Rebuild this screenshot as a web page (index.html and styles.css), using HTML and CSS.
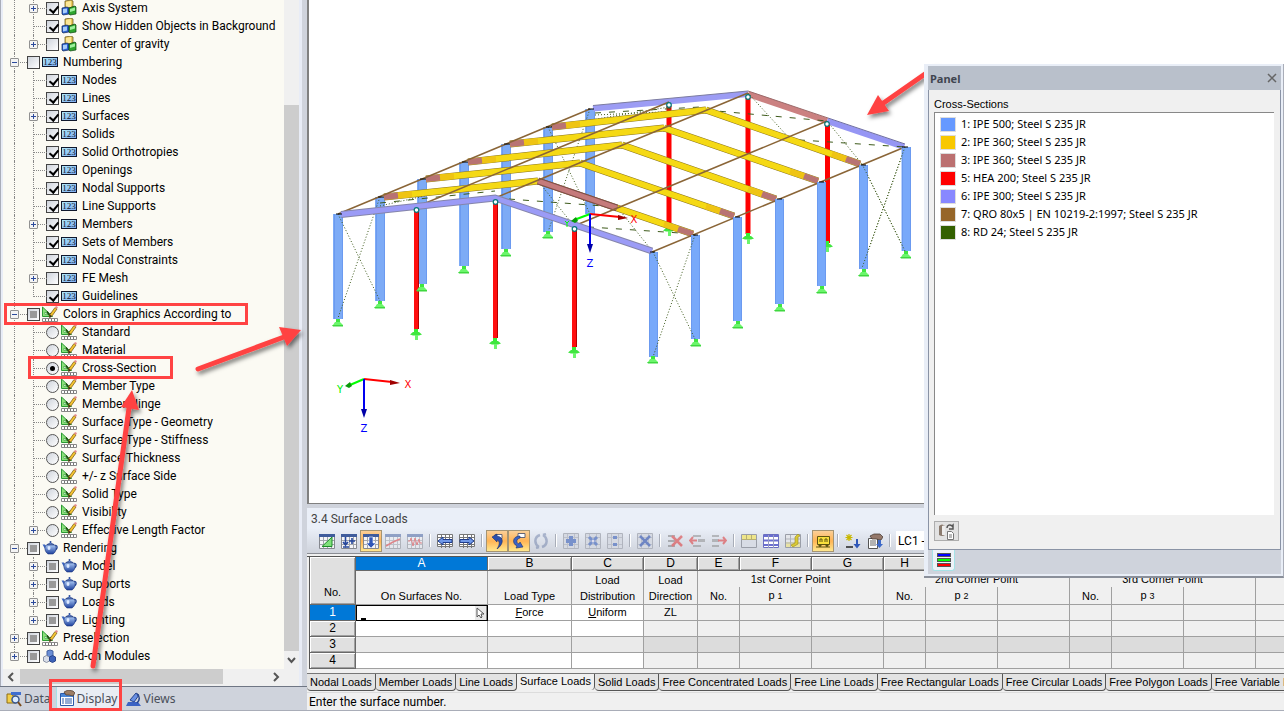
FILE: index.html
```html
<!DOCTYPE html>
<html lang="en">
<head>
    <meta charset="UTF-8">
    <meta name="viewport" content="width=device-width, initial-scale=1.0">
    <title>3.4 Surface Loads</title>
    <link rel="stylesheet" href="styles.css">
</head>
<body>
    <!-- shared icons -->
    <svg class="defs" width="0" height="0">
        <defs>
            <linearGradient id="g-blue" x1="0" y1="0" x2="0" y2="1"><stop offset="0" stop-color="#a9c8f5"/><stop offset="1" stop-color="#1c3f9c"/></linearGradient>
            <linearGradient id="g-num" x1="0" y1="0" x2="1" y2="1"><stop offset="0" stop-color="#b4ecfa"/><stop offset="1" stop-color="#7aa7f0"/></linearGradient>
            <filter id="shadow" x="-20%" y="-20%" width="150%" height="150%"><feDropShadow dx="2" dy="3" stdDeviation="2" flood-color="#000" flood-opacity=".5"/></filter>
        </defs>
        <symbol id="i-cubes" viewBox="0 0 16 16">
            <path d="M4 1l6-1 2 1v6l-6 1-2-1z" fill="#e9c85a" stroke="#5a4a12" stroke-width=".7"/>
            <path d="M5 2l5-1v6l-5 .5z" fill="#fbe796"/>
            <path d="M1 8l5-1 2 1v6l-6 1-1-1z" fill="#2c62cf" stroke="#0d2458" stroke-width=".7"/>
            <path d="M2 9l4-.5v4l-4 1z" fill="#a8cdfb"/>
            <path d="M8 8l6-2 1 1v7l-6 1-1-1z" fill="#2fa62f" stroke="#0c4410" stroke-width=".7"/>
            <path d="M9 9l5-1.5v3l-5 1.500z" fill="#9df09d"/>
        </symbol>
        <symbol id="i-num" viewBox="0 0 16 16">
            <rect x=".5" y="3.5" width="15" height="9" fill="url(#g-num)" stroke="#10182c"/>
            <text x="8" y="11" class="num-text">123</text>
        </symbol>
        <symbol id="i-color" viewBox="0 0 16 16">
            <path d="M.5 1v9.5h10z" fill="#8be07a" stroke="#2b9a35"/>
            <path d="M3 6v2.500h3z" fill="#fff" stroke="#2b9a35" stroke-width=".6"/>
            <path d="M5 5.500l3 4.500 1-3" fill="none" stroke="#1f4a12" stroke-width="1.500"/>
            <path d="M8 8.500l5-7 2 1.500-5 7-2.500 1.500z" fill="#f5c531" stroke="#6d4f10" stroke-width=".7"/>
            <path d="M8 9l-.5 2.500L10 10z" fill="#222"/>
            <path d="M13 1.500l1-1.500 2 1-1 2z" fill="#e58a8a"/>
            <path d="M.5 12.500h15v3H.5z" fill="#fff" stroke="#888"/>
            <path d="M3.500 13v2M6.500 13v2M9.500 13v2M12.500 13v2" stroke="#777"/>
        </symbol>
        <symbol id="i-pot" viewBox="0 0 16 16">
            <path d="M13 5.500c3-.5 3 4-1 5" fill="none" stroke="#274a9c" stroke-width="1.300"/>
            <path d="M.5 4.500L3 4.500l2 4v4z" fill="#3a63c0"/>
            <path d="M4 5h9c2 3 1 7-2 9H6C3 12 2 8 4 5z" fill="url(#g-blue)" stroke="#1c357c" stroke-width=".6"/>
            <path d="M5 4.500q3.500-3 7 0z" fill="#5f8be0" stroke="#1c357c" stroke-width=".6"/>
            <circle cx="8.500" cy="2" r="1" fill="#274a9c"/>
            <ellipse cx="7" cy="8" rx="1.500" ry="2" fill="#dce9ff"/>
        </symbol>
        <symbol id="i-addon" viewBox="0 0 16 16">
            <path d="M5 3l3-1 3 1v5l-3 1-3-1z" fill="#6b8fd6" stroke="#42609f"/>
            <path d="M1.500 9l3-1.500 3 1.500v4l-3 1.500-3-1.500z" fill="#d9dee8" stroke="#8b93a5"/>
            <path d="M7.500 9l3-1.500 3 1.500v4l-3 1.500-3-1.500z" fill="#3c62b8" stroke="#2a468b"/>
        </symbol>
        <symbol id="t-grid" viewBox="0 0 16 16">
            <path d="M.5 1.500h15v14H.5z" fill="#f4f5f8" stroke="#85888f"/>
            <path d="M0 1h16v3H0z" fill="#3f5c9c"/>
            <path d="M4.500 4v11M8.500 4v11M12.500 4v11M1 7.500h14M1 11.500h14" stroke="#a3a6ad"/>
        </symbol>
        <symbol id="t-move" viewBox="0 0 16 16">
            <path d="M.5 1.500h15v12H.5z" fill="#fff" stroke="#777"/>
            <path d="M4.500 2v13M8.500 2v13M12.500 2v13M1 4.500h14M1 11.500h14" stroke="#777"/>
        </symbol>
        <symbol id="t-grey" viewBox="0 0 16 16">
            <path d="M.5 .5h15v15H.5z" fill="#d5d9e2" stroke="#b0b4be"/>
            <path d="M4.500 1v14M11.500 1v14M1 4.500h14M1 11.500h14" stroke="#bcc0ca"/>
        </symbol>
        <symbol id="support" viewBox="-6 0 12 12" overflow="visible">
            <path d="M-2 0h4v3h-4z" fill="#3fe63f"/>
            <path d="M-3 3h5l3 3h-10z" fill="#6cf56c"/>
            <path d="M-6 6h11v1.500H-5z" fill="#3fd83f"/>
        </symbol>
        <symbol id="support-red" viewBox="-6 0 12 12" overflow="visible">
            <path d="M-2 0h4v4h-4z" fill="#35ef35"/>
            <path d="M-3 3h6l3 2.500-3 1h-6l-3-1z" fill="#3fe63f"/>
            <path d="M-1 6h3v5h-3z" fill="#6cf56c"/>
        </symbol>
    </svg>

    <div class="app">
        <aside class="navigator">
            <div class="tree-area">
                <ul class="tree">
                    <li class="row sub"><button class="tog" aria-label="Expand"></button><label><input type="checkbox" checked><svg><use href="#i-cubes"/></svg>Axis System</label></li>
                    <li class="row sub"><label><input type="checkbox" checked><svg><use href="#i-cubes"/></svg>Show Hidden Objects in Background</label></li>
                    <li class="row sub last"><button class="tog" aria-label="Expand"></button><label><input type="checkbox"><svg><use href="#i-cubes"/></svg>Center of gravity</label></li>
                    <li class="row"><button class="tog open" aria-label="Collapse"></button><label><input type="checkbox"><svg><use href="#i-num"/></svg>Numbering</label></li>
                    <li class="row sub"><label><input type="checkbox" checked><svg><use href="#i-num"/></svg>Nodes</label></li>
                    <li class="row sub"><label><input type="checkbox" checked><svg><use href="#i-num"/></svg>Lines</label></li>
                    <li class="row sub"><button class="tog" aria-label="Expand"></button><label><input type="checkbox" checked><svg><use href="#i-num"/></svg>Surfaces</label></li>
                    <li class="row sub"><label><input type="checkbox" checked><svg><use href="#i-num"/></svg>Solids</label></li>
                    <li class="row sub"><label><input type="checkbox" checked><svg><use href="#i-num"/></svg>Solid Orthotropies</label></li>
                    <li class="row sub"><label><input type="checkbox" checked><svg><use href="#i-num"/></svg>Openings</label></li>
                    <li class="row sub"><label><input type="checkbox" checked><svg><use href="#i-num"/></svg>Nodal Supports</label></li>
                    <li class="row sub"><label><input type="checkbox" checked><svg><use href="#i-num"/></svg>Line Supports</label></li>
                    <li class="row sub"><button class="tog" aria-label="Expand"></button><label><input type="checkbox" checked><svg><use href="#i-num"/></svg>Members</label></li>
                    <li class="row sub"><label><input type="checkbox" checked><svg><use href="#i-num"/></svg>Sets of Members</label></li>
                    <li class="row sub"><label><input type="checkbox" checked><svg><use href="#i-num"/></svg>Nodal Constraints</label></li>
                    <li class="row sub"><button class="tog" aria-label="Expand"></button><label><input type="checkbox"><svg><use href="#i-num"/></svg>FE Mesh</label></li>
                    <li class="row sub last"><label><input type="checkbox" checked><svg><use href="#i-num"/></svg>Guidelines</label></li>
                    <li class="row"><button class="tog open" aria-label="Collapse"></button><label><input type="checkbox" class="mixed"><svg><use href="#i-color"/></svg>Colors in Graphics According to</label></li>
                    <li class="row sub"><label><input type="radio" name="colors"><svg><use href="#i-color"/></svg>Standard</label></li>
                    <li class="row sub"><label><input type="radio" name="colors"><svg><use href="#i-color"/></svg>Material</label></li>
                    <li class="row sub"><label><input type="radio" name="colors" checked><svg><use href="#i-color"/></svg>Cross-Section</label></li>
                    <li class="row sub"><label><input type="radio" name="colors"><svg><use href="#i-color"/></svg>Member Type</label></li>
                    <li class="row sub"><label><input type="radio" name="colors"><svg><use href="#i-color"/></svg>Member Hinge</label></li>
                    <li class="row sub"><label><input type="radio" name="colors"><svg><use href="#i-color"/></svg>Surface Type - Geometry</label></li>
                    <li class="row sub"><label><input type="radio" name="colors"><svg><use href="#i-color"/></svg>Surface Type - Stiffness</label></li>
                    <li class="row sub"><label><input type="radio" name="colors"><svg><use href="#i-color"/></svg>Surface Thickness</label></li>
                    <li class="row sub"><label><input type="radio" name="colors"><svg><use href="#i-color"/></svg>+/- z Surface Side</label></li>
                    <li class="row sub"><label><input type="radio" name="colors"><svg><use href="#i-color"/></svg>Solid Type</label></li>
                    <li class="row sub"><label><input type="radio" name="colors"><svg><use href="#i-color"/></svg>Visibility</label></li>
                    <li class="row sub last"><button class="tog" aria-label="Expand"></button><label><input type="radio" name="colors"><svg><use href="#i-color"/></svg>Effective Length Factor</label></li>
                    <li class="row"><button class="tog open" aria-label="Collapse"></button><label><input type="checkbox" class="mixed"><svg><use href="#i-pot"/></svg>Rendering</label></li>
                    <li class="row sub"><button class="tog" aria-label="Expand"></button><label><input type="checkbox" class="mixed"><svg><use href="#i-pot"/></svg>Model</label></li>
                    <li class="row sub"><button class="tog" aria-label="Expand"></button><label><input type="checkbox" class="mixed"><svg><use href="#i-pot"/></svg>Supports</label></li>
                    <li class="row sub"><button class="tog" aria-label="Expand"></button><label><input type="checkbox" class="mixed"><svg><use href="#i-pot"/></svg>Loads</label></li>
                    <li class="row sub last"><button class="tog" aria-label="Expand"></button><label><input type="checkbox" class="mixed"><svg><use href="#i-pot"/></svg>Lighting</label></li>
                    <li class="row"><button class="tog" aria-label="Expand"></button><label><input type="checkbox" class="mixed"><svg><use href="#i-color"/></svg>Preselection</label></li>
                    <li class="row end"><button class="tog" aria-label="Expand"></button><label><input type="checkbox" class="mixed"><svg><use href="#i-addon"/></svg>Add-on Modules</label></li>
                </ul>
                <div class="vscroll">
                    <div class="vthumb"></div>
                    <svg width="15" height="18"><path d="M4 7l3.500 4L11 7" fill="none" stroke="#555" stroke-width="2"/></svg>
                </div>
            </div>
            <div class="hscroll">
                <svg width="17" height="16"><path d="M10 4L6 8l4 4" fill="none" stroke="#555" stroke-width="2"/></svg>
                <div class="htrack"><div class="hthumb"></div></div>
                <svg width="32" height="16"><path d="M7 4l4 4-4 4" fill="none" stroke="#555" stroke-width="2"/></svg>
            </div>
            <nav class="nav-tabs">
                <button class="nav-tab">
                    <svg viewBox="0 0 16 16"><path d="M1 3h5l1 2h3v7H1z" fill="#f3cf4a" stroke="#8d6c14"/><path d="M5 1h10v3H5z" fill="#3f6fd1"/><circle cx="9.500" cy="8.500" r="3.500" fill="#dcecff" stroke="#395890" stroke-width="1.500"/><path d="M12 11l3 4" stroke="#7a4c1c" stroke-width="2"/></svg>Data</button>
                <button class="nav-tab active">
                    <svg viewBox="0 0 16 16"><path d="M1.500 3.500h13v12h-13z" fill="#fff" stroke="#2a5aa8"/><path d="M2 4h12v3H2z" fill="#4a86d8"/><path d="M3 9h2M3 11h2M3 13h2M6 9h7M6 11h7M6 13h7" stroke="#2a5aa8"/><path d="M5 2l4-2 5 1 2 2-2 3-4-1-3 0z" fill="#9c7d64" stroke="#4c382a" stroke-width=".7"/></svg>Display</button>
                <button class="nav-tab">
                    <svg viewBox="0 0 16 16"><path d="M2 11h10l3 4H0z" fill="#3c63c4"/><path d="M4 9l6-7 3 2-5 7z" fill="#6a90e4" stroke="#27458c"/><path d="M11 3c3 3 3 6 0 9" fill="none" stroke="#27458c" stroke-width="1.500"/></svg>Views</button>
            </nav>
        </aside>

        <main class="work">
            <div class="viewport">
                <svg class="model" width="975" height="503" viewBox="309 0 975 503">
                    <!-- rear gable columns -->
                    <g stroke="#f00" stroke-width="5"><path d="M669 106V227M748 98V234M827.500 124V243"/></g>
                    <use href="#support-red" x="663" y="225" width="12" height="12"/>
                    <use href="#support-red" x="742" y="233" width="12" height="12"/>
                    <use href="#support-red" x="821" y="241" width="12" height="12"/>

                    <!-- left wall columns -->
                    <g stroke="#7dabf6" stroke-width="10"><path d="M338 214V319M380 197V301M422 179V284M464 162V266M506 144V249M548 127V232M590 109V214"/></g>
                    <g stroke="#6b9af0"><path d="M334.500 214V319M342.500 214V319M376.500 197V301M384.500 197V301M418.500 179V284M426.500 179V284M460.500 162V266M468.500 162V266M502.500 144V249M510.500 144V249M544.500 127V232M552.500 127V232M586.500 109V214M594.500 109V214"/></g>

                    <!-- rear gable rafters -->
                    <path d="M593 108.500L748 94" stroke="#9c9cf4" stroke-width="6"/>
                    <path d="M593 105.500L748 91" stroke="#7c7ca0"/>
                    <path d="M748 94L827 121" stroke="#cb8181" stroke-width="6"/>
                    <path d="M748 91L828 118" stroke="#9b6a6a"/>
                    <path d="M827 121L904 147" stroke="#9696f4" stroke-width="6"/>
                    <path d="M828 118L905 144" stroke="#6d6da0"/>

                    <!-- roof and wall bracing -->
                    <g class="brace">
                        <path d="M338 214L380 301M380 197L338 318M548 127L590 214M590 109L548 232M862 164L905 251M905 147L862 268"/>
                        <path d="M380 206L459 188M538 181L574 226M617 207L653 252M748 93L790 139M827 121L862 164M548 127L669 107M595 115L706 110"/>
                        <path class="long" d="M495 198L617 207M574 226L695 234M706 110L827 121M785 139L905 147M380 203L495 191M595 113L700 107"/>
                    </g>

                    <!-- inner frames -->
                    <g stroke="#8a7420" stroke-width="7">
                        <path d="M384 197L538 181M426 179L580 163M468 162L622 145M510 144L664 128M552 127L706 110"/>
                        <path d="M538 181L693 234M580 163L734 216M622 145L776 199M664 128L818 181M706 110L860 164"/>
                    </g>
                    <g stroke="#f5d914" stroke-width="6">
                        <path d="M384 197L538 181M426 179L580 163M468 162L622 145M510 144L664 128M552 127L706 110"/>
                        <path d="M538 181L693 234M580 163L734 216M622 145L776 199M664 128L818 181M706 110L860 164"/>
                    </g>
                    <g stroke="#efc414" stroke-width="6"><path d="M398 195.500L412 194M440 177.500L454 176M482 160.500L496 159M524 142.500L538 141M566 125.500L580 124M664 224L678 229M706 206.500L720 211M748 189L762 194M790 171.500L804 176M832 154L846 159"/></g>
                    <g stroke="#b87373" stroke-width="6">
                        <path d="M384 197L398 195.500M426 179L440 177.500M468 162L482 160.500M510 144L524 142.500M552 127L566 125.500"/>
                        <path d="M678 229L693 234M720 211L734 216M762 194L776 199M804 176L818 181M846 159L860 164"/>
                    </g>
                    <path d="M538 181L617 208" stroke="#7d4b4b" stroke-width="7"/>
                    <path d="M538 181L617 208" stroke="#c57b7b" stroke-width="5"/>

                    <!-- purlins -->
                    <g stroke="#8a6537" stroke-width="1.500"><path d="M338 214L590 109M416 207L669 102M495 198L748 93M574 226L827 121M652 252L905 147"/></g>

                    <!-- right wall columns -->
                    <g stroke="#78a9fa" stroke-width="9"><path d="M653.500 252V357M695.500 235V339M737.500 217V321M779.500 199V304M821.500 182V286M863.500 165V269M906 147V251"/></g>
                    <g stroke="#6b9af0"><path d="M649.500 252V357M657.500 252V357M691.500 235V339M699.500 235V339M733.500 217V321M741.500 217V321M775.500 199V304M783.500 199V304M817.500 182V286M825.500 182V286M859.500 165V269M867.500 165V269M902.500 147V251M910.500 147V251"/></g>
                    <g class="brace"><path d="M653 252L695 339M695 235L653 357M905 147L862 268M862 164L905 251"/></g>

                    <!-- front gable -->
                    <path d="M341 214.500L495 198L652 251" fill="none" stroke="#8585aa" stroke-width="7"/>
                    <path d="M341 214.500L495 198L652 251" fill="none" stroke="#9b9bf6" stroke-width="5"/>
                    <g stroke="#b80000" stroke-width="5"><path d="M416.500 210V329M495.500 202V338M574.500 229V347"/></g>
                    <g stroke="#ff0f0f" stroke-width="4"><path d="M416 210V329M495 202V338M574 229V347"/></g>
                    <path d="M336 214h6M378 197h6M420 179h6M462 162h6M504 144h6M546 127h6M588 109h6M650 252h5M693 235h5M735 217h5M777 199h5M819 182h5M861 165h5M902 147h6" stroke="#000"/>

                    <!-- hinges -->
                    <g class="hinge"><circle cx="416.500" cy="210" r="2.300"/><circle cx="495.500" cy="202" r="2.300"/><circle cx="574.500" cy="229" r="2.300"/><circle cx="669" cy="105" r="2.300"/><circle cx="748" cy="97" r="2.300"/><circle cx="827" cy="124" r="2.300"/></g>

                    <!-- supports -->
                    <use href="#support" x="332" y="319" width="12" height="12"/>
                    <use href="#support" x="374" y="301" width="12" height="12"/>
                    <use href="#support" x="416" y="284" width="12" height="12"/>
                    <use href="#support" x="458" y="266" width="12" height="12"/>
                    <use href="#support" x="500" y="249" width="12" height="12"/>
                    <use href="#support" x="542" y="231" width="12" height="12"/>
                    <use href="#support" x="647" y="356" width="12" height="12"/>
                    <use href="#support" x="690" y="339" width="12" height="12"/>
                    <use href="#support" x="732" y="321" width="12" height="12"/>
                    <use href="#support" x="774" y="304" width="12" height="12"/>
                    <use href="#support" x="816" y="286" width="12" height="12"/>
                    <use href="#support" x="858" y="269" width="12" height="12"/>
                    <use href="#support" x="900" y="251" width="12" height="12"/>
                    <use href="#support-red" x="410" y="329" width="12" height="12"/>
                    <use href="#support-red" x="489" y="338" width="12" height="12"/>
                    <use href="#support-red" x="568" y="347" width="12" height="12"/>

                    <!-- work plane axes -->
                    <path d="M590 214L574 220" stroke="#0f0" stroke-width="2"/><path d="M571 221l5-4 2 4-3 2z" fill="#0a9a0a"/>
                    <path d="M565 221l2 2 2-2M567 223v4" stroke="#0f0" fill="none"/>
                    <path d="M590 214L620 217" stroke="#f00" stroke-width="2"/><path d="M628 218l-10-3v5z" fill="#a00000"/>
                    <path d="M590 214V246" stroke="#0000f0" stroke-width="2"/><path d="M587 244h6l-3 9z" fill="#0000a8"/>
                    <text x="634" y="223" class="axis ax-x">X</text><text x="590" y="267" class="axis ax-z">Z</text>
                    <!-- global axes -->
                    <path d="M364 379L350 385" stroke="#0f0" stroke-width="2"/><path d="M345 386l5-4 2 4-3 2z" fill="#0a9a0a"/>
                    <path d="M364 379L392 382" stroke="#f00" stroke-width="2"/><path d="M400 383l-10-3v5z" fill="#a00000"/>
                    <path d="M364 379V411" stroke="#0000f0" stroke-width="2"/><path d="M361 409h6l-3 9z" fill="#0000a8"/>
                    <text x="340" y="393" class="axis ax-y">Y</text><text x="408" y="388" class="axis ax-x">X</text><text x="364" y="432" class="axis ax-z">Z</text>
                </svg>
            </div>

            <section class="tables">
                <h2 class="tables-title">3.4 Surface Loads</h2>
                <div class="toolbar">
                    <button class="tool"><svg viewBox="0 0 16 16"><use href="#t-grid"/><path d="M3 13.500L13 4v9.500z" fill="#7fe07a" stroke="#1f8a2a"/></svg></button>
                    <button class="tool"><svg viewBox="0 0 16 16"><use href="#t-grid"/><path d="M4.500 4v8M2 9l2.500 3L7 9M2 14h6M8 8h6M11 5v6" fill="none" stroke="#26479c" stroke-width="1.600"/></svg></button>
                    <button class="tool on"><svg viewBox="0 0 16 16"><use href="#t-grid"/><path d="M6 4h4v6h3l-5 5-5-5h3z" fill="#2f57b8" stroke="#fff" stroke-width=".6"/></svg></button>
                    <button class="tool dim"><svg viewBox="0 0 16 16"><use href="#t-grid"/><path d="M1 13l7-4 7-3" fill="none" stroke="#e03030" stroke-width="1.500"/></svg></button>
                    <button class="tool dim"><svg viewBox="0 0 16 16"><use href="#t-grid"/><path d="M1 8h2l1-3 2 8 2-8 2 7 2-6 1 4h2" fill="none" stroke="#e03030"/></svg></button>
                    <span class="sep"></span>
                    <button class="tool"><svg viewBox="0 0 16 16"><use href="#t-move"/><path d="M1 8l5-4v2.500h9v3H6V12z" fill="#6f98e8" stroke="#1f3c8c"/></svg></button>
                    <button class="tool"><svg viewBox="0 0 16 16"><use href="#t-move"/><path d="M15 8l-5-4v2.500H1v3h9V12z" fill="#6f98e8" stroke="#1f3c8c"/></svg></button>
                    <span class="sep"></span>
                    <button class="tool on"><svg viewBox="0 0 16 16"><path d="M6 1.500h7v4H6z" fill="#fff" stroke="#667"/><path d="M3 4l5-3v2c7 1 7 8 0 13 3-5 3-8 0-9v2z" fill="#2c4fae" stroke="#18306f" stroke-width=".6"/></svg></button>
                    <button class="tool on"><svg viewBox="0 0 16 16"><path d="M7 .5h7v4H7z" fill="#fff" stroke="#667"/><path d="M9 3C1 3 1 11 6 13l-1 2 7-1-3-5-1 2C5 10 5 6 9 5z" fill="#3c62c4" stroke="#18306f" stroke-width=".6"/></svg></button>
                    <button class="tool dim"><svg viewBox="0 0 16 16"><path d="M7 2C1 4 1 11 6 14M9 14c6-2 6-9 1-12M6 14l-3 1M10 2l3-1" fill="none" stroke="#6f80a8" stroke-width="2.500"/></svg></button>
                    <span class="sep"></span>
                    <button class="tool"><svg viewBox="0 0 16 16"><use href="#t-grey"/><path d="M8 3v10M3 8h10" stroke="#7891cb" stroke-width="4"/></svg></button>
                    <button class="tool"><svg viewBox="0 0 16 16"><use href="#t-grey"/><path d="M4 4l8 8M12 4l-8 8" stroke="#7891cb" stroke-width="3"/><circle cx="8" cy="8" r="1.500" fill="#dde"/></svg></button>
                    <button class="tool"><svg viewBox="0 0 16 16"><use href="#t-grey"/><path d="M6 3h4v3H6zM6 10h4v3H6z" fill="#7891cb"/></svg></button>
                    <span class="sep"></span>
                    <button class="tool"><svg viewBox="0 0 16 16"><use href="#t-grey"/><path d="M3 3l10 10M13 3L3 13" stroke="#6f86c4" stroke-width="2.500"/></svg></button>
                    <span class="sep"></span>
                    <button class="tool dim"><svg viewBox="0 0 16 16"><path d="M1 2h7v2H1zM1 7h7v2H1zM1 12h7v2H1z" fill="#777"/><path d="M5 3l10 10M15 3L5 13" stroke="#d22" stroke-width="2.500"/></svg></button>
                    <button class="tool dim"><svg viewBox="0 0 16 16"><path d="M4 2h8v2H4zM9 6h7v3H9zM4 12h8v2H4z" fill="#888"/><path d="M1 7.500h7M4 4L1 7.500 4 11" fill="none" stroke="#d22" stroke-width="2"/></svg></button>
                    <button class="tool dim"><svg viewBox="0 0 16 16"><path d="M1 2h7v2H1zM1 6h7v3H1zM1 12h7v2H1z" fill="#888"/><path d="M7 7.500h8M12 4l3 3.500-3 3.500" fill="none" stroke="#d22" stroke-width="2"/></svg></button>
                    <span class="sep"></span>
                    <button class="tool"><svg viewBox="0 0 16 16"><path d="M.5 1.500h15v13H.5z" fill="#d8dce5" stroke="#9a9ea8"/><path d="M1 2h14v4H1z" fill="#eee58a"/><path d="M5.500 2v4M10.500 2v4M1 6.500h14" stroke="#b8b070"/></svg></button>
                    <button class="tool"><svg viewBox="0 0 16 16"><path d="M.5 1.500h15v13H.5z" fill="#fff" stroke="#6a6ec0"/><path d="M1 3h14M1 7.500h14M1 12h14" stroke="#6a6ed0" stroke-width="2"/><path d="M5.500 2v13M10.500 2v13" stroke="#9a9ec0"/></svg></button>
                    <button class="tool"><svg viewBox="0 0 16 16"><path d="M.5 1.500h15v13H.5z" fill="#e4e6ea" stroke="#9a9ea8"/><path d="M1 9h14v5H1z" fill="#e8e2a4"/><path d="M5.500 2v12M1 6h14M1 10h14" stroke="#b0b3ba"/><path d="M6 12l4-2V4l3-3 2 2-2 1v7l-5 3z" fill="#d9c936" stroke="#9a8c20" stroke-width=".6"/></svg></button>
                    <span class="sep"></span>
                    <button class="tool on"><svg viewBox="0 0 16 16"><path d="M2.500 3.500h12v8h-12z" fill="#f9df3c" stroke="#5f5410"/><path d="M5 9V6h2v3M10 9V6h2v3M1 14h14" fill="none" stroke="#5f5410"/><circle cx="5" cy="12.500" r="1.500" fill="#5f5410"/><circle cx="12" cy="12.500" r="1.500" fill="#5f5410"/></svg></button>
                    <span class="sep"></span>
                    <button class="tool"><svg viewBox="0 0 16 16"><path d="M4 1v7M.5 4.500h7M1.500 2l5 5M6.500 2l-5 5" stroke="#c9b800" stroke-width="1.200"/><path d="M1 14h7" stroke="#222" stroke-width="1.500"/><path d="M11 6h2v5h2.500L12 15.500 8.500 11H11z" fill="#2f57b8"/></svg></button>
                    <button class="tool"><svg viewBox="0 0 16 16"><path d="M1.500 5.500h9v10h-9z" fill="#fff" stroke="#555"/><path d="M3 8h6M3 10h6M3 12h6" stroke="#666"/><path d="M3 3l4-2 6 0 3 3-2 3-5-1-4 0z" fill="#94786a" stroke="#3d3029" stroke-width=".7"/><path d="M11 7h3v4h2l-3.500 4L9 11h2z" fill="#3c68c8"/></svg></button>
                    <span class="sep"></span>
                    <select class="case" aria-label="Load case"><option>LC1 - Self-weight</option></select>
                </div>

                <div class="sheet">
                    <table class="grid">
                        <colgroup>
                            <col class="c-no"><col class="c-a"><col class="c-b"><col class="c-p"><col class="c-d">
                            <col class="c-n"><col class="c-p"><col class="c-p">
                            <col class="c-n"><col class="c-p"><col class="c-p">
                            <col class="c-n"><col class="c-p"><col class="c-p"><col class="c-p">
                        </colgroup>
                        <thead>
                            <tr class="letters"><th rowspan="3" class="corner">No.</th><th class="sel">A</th><th>B</th><th>C</th><th>D</th><th>E</th><th>F</th><th>G</th><th>H</th><th>I</th><th>J</th><th>K</th><th>L</th><th>M</th><th></th></tr>
                            <tr class="names"><th rowspan="2">On Surfaces No.</th><th rowspan="2">Load Type</th><th rowspan="2">Load<br>Distribution</th><th rowspan="2">Load<br>Direction</th><th colspan="3" class="group">1st Corner Point</th><th colspan="3" class="group">2nd Corner Point</th><th colspan="3" class="group">3rd Corner Point</th><th rowspan="2"></th></tr>
                            <tr class="names"><th>No.</th><th>p <small>1</small></th><th></th><th>No.</th><th>p <small>2</small></th><th></th><th>No.</th><th>p <small>3</small></th><th></th></tr>
                        </thead>
                        <tbody>
                            <tr><th class="sel">1</th><td class="edit"><div class="editor"><input type="text" value="" aria-label="On Surfaces No."><button class="pick" aria-label="Pick"><svg width="10" height="12"><path d="M2 1v9l2-2 2 3 1-1-1-3h3z" fill="#fff" stroke="#555"/></svg></button></div></td><td><u>F</u>orce</td><td><u>U</u>niform</td><td class="off">ZL</td><td class="off"></td><td class="off"></td><td class="off"></td><td class="off"></td><td class="off"></td><td class="off"></td><td class="off"></td><td class="off"></td><td class="off"></td><td class="off"></td></tr>
                            <tr><th>2</th><td></td><td></td><td></td><td class="off"></td><td class="off"></td><td class="off"></td><td class="off"></td><td class="off"></td><td class="off"></td><td class="off"></td><td class="off"></td><td class="off"></td><td class="off"></td><td class="off"></td></tr>
                            <tr class="alt"><th>3</th><td></td><td></td><td></td><td class="off"></td><td class="off"></td><td class="off"></td><td class="off"></td><td class="off"></td><td class="off"></td><td class="off"></td><td class="off"></td><td class="off"></td><td class="off"></td><td class="off"></td></tr>
                            <tr><th>4</th><td></td><td></td><td></td><td class="off"></td><td class="off"></td><td class="off"></td><td class="off"></td><td class="off"></td><td class="off"></td><td class="off"></td><td class="off"></td><td class="off"></td><td class="off"></td><td class="off"></td></tr>
                        </tbody>
                    </table>
                </div>

                <nav class="sheet-tabs">
                    <button>Nodal Loads</button><button>Member Loads</button><button>Line Loads</button><button class="active">Surface Loads</button><button>Solid Loads</button><button>Free Concentrated Loads</button><button>Free Line Loads</button><button>Free Rectangular Loads</button><button>Free Circular Loads</button><button>Free Polygon Loads</button><button>Free Variable Loads</button>
                </nav>
                <footer class="status">Enter the surface number.</footer>
            </section>
        </main>

        <!-- callouts over the window -->
        <svg class="callouts" width="1284" height="711">
            <g fill="none" stroke="#ff4343" stroke-width="3"><path d="M5.500 304.500h241v19h-241zM29.500 357.500h142v20h-142zM50.500 680.500h70v29h-70z"/></g>
            <g filter="url(#shadow)" fill="#ff4343" stroke-linecap="round">
                <path d="M198 369L284 337" stroke="#ff4343" stroke-width="5"/><path d="M301 330l-22-3 8 19z"/>
                <path d="M93 666L129 408" stroke="#ff4343" stroke-width="5"/><path d="M132 390l-11 17 18 3z"/>
                <path d="M935 67L882 104" stroke="#ff4343" stroke-width="5"/><path d="M867 115l11-20 11 16z"/>
            </g>
        </svg>

        <section class="panel">
            <header class="panel-title"><h2>Panel</h2><button class="close" aria-label="Close"><svg width="10" height="10"><path d="M1 1l8 8M9 1L1 9" stroke="#666" stroke-width="1.500"/></svg></button></header>
            <div class="panel-body">
                <h3>Cross-Sections</h3>
                <ul class="legend">
                    <li><i class="sw blue"></i>1: IPE 500; Steel S 235 JR</li>
                    <li><i class="sw yellow"></i>2: IPE 360; Steel S 235 JR</li>
                    <li><i class="sw rose"></i>3: IPE 360; Steel S 235 JR</li>
                    <li><i class="sw red"></i>5: HEA 200; Steel S 235 JR</li>
                    <li><i class="sw violet"></i>6: IPE 300; Steel S 235 JR</li>
                    <li><i class="sw brown"></i>7: QRO 80x5 | EN 10219-2:1997; Steel S 235 JR</li>
                    <li><i class="sw green"></i>8: RD 24; Steel S 235 JR</li>
                </ul>
                <button class="panel-btn" aria-label="Options"><svg width="17" height="17"><path d="M1 3q3-3 6 0v9q-3 2-6 0z" fill="#8b7b6e"/><path d="M4 3q2-1 3 0v9h-3z" fill="#eee"/><path d="M9 5c0-3 3-4 5-2l1-1v4h-4" fill="none" stroke="#555" stroke-width="1.500"/><path d="M9.500 8.500h4l2 2v6h-6z" fill="#fff" stroke="#777"/><path d="M11 12h3M11 14h3" stroke="#777"/></svg></button>
            </div>
            <div class="panel-tabs"><button class="panel-tab" aria-label="Colors"><i class="bar b"></i><i class="bar g"></i><i class="bar r"></i></button></div>
        </section>
    </div>
</body>
</html>
```
FILE: styles.css
```css
* {
    box-sizing: border-box;
}
body {
    margin: 0;
    font-family: "Noto Sans", sans-serif;
    font-size: 12px;
    color: #000;
    background: #cfd3dc;
}
button {
    font: inherit;
    color: inherit;
    margin: 0;
    padding: 0;
    border: 0;
    background: none;
}
h2, h3, ul {
    margin: 0;
    padding: 0;
    font-weight: normal;
}
.defs {
    position: absolute;
}
.app {
    position: relative;
    display: flex;
    height: 100vh;
    min-height: 600px;
    overflow: hidden;
}

/* navigator */
.navigator {
    display: flex;
    flex-direction: column;
    width: 302px;
    flex: none;
    background: #e8ecf6;
    border-left: 1px solid #a9adb8;
}
.tree-area {
    display: flex;
    flex: 1;
    min-height: 0;
    padding: 0 3px 0 2px;
}
.tree {
    flex: 1;
    list-style: none;
    background: #fbfaf3;
    overflow: hidden;
    margin-top: -1px;
    font-family: Roboto, sans-serif;
}
.row {
    display: flex;
    align-items: center;
    height: 18px;
    padding-left: 24px;
    position: relative;
    white-space: nowrap;
}
.row label {
    display: flex;
    align-items: center;
}
.row label svg {
    width: 16px;
    height: 16px;
    margin: 0 5px 0 2px;
}
.row.sub {
    padding-left: 43px;
}
.row::before {
    content: "";
    position: absolute;
    left: 11px;
    top: 0;
    bottom: 0;
    border-left: 1px dotted #888;
}
.row.end::before {
    bottom: 9px;
}
.row::after {
    content: "";
    position: absolute;
    left: 12px;
    top: 9px;
    width: 12px;
    border-top: 1px dotted #888;
}
.row.sub::after {
    left: 30px;
    top: 0;
    width: 13px;
    height: 18px;
    border-top: 0;
    border-left: 1px dotted #888;
    background: repeating-linear-gradient(90deg, #888 0 1px, transparent 1px 2px) 0 9px / 100% 1px no-repeat;
}
.row.sub.last::after {
    height: 10px;
}
.tog {
    position: absolute;
    z-index: 1;
    left: 7px;
    top: 5px;
    width: 9px;
    height: 9px;
    border: 1px solid #919191;
    border-radius: 1px;
    background:
        linear-gradient(#2b4a9c, #2b4a9c) center / 5px 1px no-repeat,
        linear-gradient(#2b4a9c, #2b4a9c) center / 1px 5px no-repeat,
        #f4f4f4;
}
.tog.open {
    background: linear-gradient(#2b4a9c, #2b4a9c) center / 5px 1px no-repeat, #f4f4f4;
}
.sub .tog {
    left: 26px;
}
input[type=checkbox], input[type=radio] {
    appearance: none;
    flex: none;
    width: 13px;
    height: 13px;
    margin: 0;
    border: 1px solid #444;
    background: linear-gradient(135deg, #cfd4dc, #fff);
    position: relative;
}
input[type=radio] {
    border-radius: 50%;
    border-color: #555;
}
input[type=checkbox]:checked::after {
    content: "";
    position: absolute;
    left: 4px;
    top: 1px;
    width: 4px;
    height: 7px;
    border: solid #000;
    border-width: 0 2px 2px 0;
    transform: rotate(40deg);
}
input.mixed::after {
    content: "";
    position: absolute;
    inset: 2px;
    background: #999;
}
input[type=radio]:checked::after {
    content: "";
    position: absolute;
    inset: 3px;
    border-radius: 50%;
    background: #000;
}
.num-text {
    font: 9px "Liberation Serif", serif;
    text-anchor: middle;
    fill: #10182c;
}
.vscroll {
    display: flex;
    flex-direction: column;
    width: 15px;
    background: #f0f0f0;
}
.vthumb {
    flex: 1;
    margin-top: 105px;
    background: #cdcdcd;
}
.hscroll {
    display: flex;
    height: 17px;
    margin: 0 3px 0 2px;
    background: #f0f0f0;
}
.htrack {
    flex: 1;
}
.hthumb {
    width: 82%;
    height: 15px;
    background: #cdcdcd;
}
.nav-tabs {
    display: flex;
    height: 25px;
    padding: 0 4px;
    gap: 3px;
    background: #cfd3dc;
    border-top: 1px solid #6f7684;
    border-bottom: 1px solid #a9adb8;
    margin-left: -1px;
    margin-right: -6px;
    color: #4a4f5a;
}
.nav-tab {
    display: flex;
    align-items: center;
    gap: 2px;
    padding: 0 2px;
}
.nav-tab svg {
    width: 16px;
    height: 16px;
}
.nav-tab.active {
    background: #e9edf4;
    border: 1px solid #a6e2e6;
    border-top: 0;
    border-radius: 0 0 3px 3px;
}

/* work area */
.work {
    display: flex;
    flex-direction: column;
    flex: 1;
    min-width: 0;
    margin-left: 5px;
}
.viewport {
    flex: 1;
    min-height: 0;
    overflow: hidden;
    background: #fff;
    border-left: 2px solid #808080;
    border-bottom: 1px solid #808080;
}
.model {
    display: block;
}
.brace path {
    fill: none;
    stroke: #3d5a1a;
    stroke-width: 1;
    stroke-dasharray: 1 2;
}
.brace .long {
    stroke-dasharray: 6 8;
}
.hinge circle {
    fill: #fff;
    stroke: #067878;
    stroke-width: 1.2;
}
.axis {
    font: 10px "DejaVu Sans", sans-serif;
    text-anchor: middle;
}
.ax-x {
    fill: #f00;
}
.ax-y {
    fill: #0e0;
}
.ax-z {
    fill: #00f;
}
.tables {
    margin-top: 4px;
    background: #f0f0f0;
    border-bottom: 1px solid #a9adb8;
}
.tables-title {
    height: 20px;
    padding-left: 4px;
    background: #eaeff8;
    font: 12px/22px Roboto, sans-serif;
    color: #444;
}
.toolbar {
    display: flex;
    align-items: center;
    height: 26px;
    padding-left: 9px;
    background: linear-gradient(#eaeff8, #cfd3dc);
    border-bottom: 1px solid #8a8d94;
}
.tool {
    flex: none;
    width: 22px;
    height: 22px;
    padding: 2px;
}
.tool svg {
    display: block;
    width: 16px;
    height: 16px;
    margin: auto;
}
.tool.on {
    border: 1px solid #a59472;
    background: linear-gradient(#fbcf98, #ffb455 50%, #ffe88e);
    padding: 0;
}
.tool.dim svg {
    opacity: .5;
}
.sep {
    flex: none;
    width: 2px;
    height: 13px;
    margin: 0 3px;
    background: #a8adb8;
    border-right: 1px solid #fff;
}
.case {
    appearance: none;
    width: 120px;
    height: 19px;
    margin-left: 2px;
    padding: 0 2px;
    border: 0;
    background: #fff;
    color: #000;
    font: 12px Roboto, sans-serif;
}
.sheet {
    margin-top: 2px;
    padding: 0 0 4px 2px;
    overflow: hidden;
    font: 12px "Liberation Sans", Arial, sans-serif;
    border-top: 1px solid #555;
}
.grid {
    table-layout: fixed;
    width: 1019px;
    border-collapse: separate;
    border-spacing: 0;
    border-left: 1px solid #555;
}
.c-no { width: 46px; }
.c-a { width: 132px; }
.c-b { width: 84px; }
.c-p { width: 72px; }
.c-d { width: 54px; }
.c-n { width: 42px; }
.grid th, .grid td {
    height: 16px;
    padding: 0;
    border-right: 1px solid #a0a0a0;
    border-bottom: 1px solid #a0a0a0;
    font-size: 11px;
    font-weight: normal;
    line-height: 15px;
    text-align: center;
    white-space: nowrap;
}
.grid td {
    background: #fff;
}
.grid .alt td {
    background: #eaeaea;
}
.grid td.off {
    background: #f0f0f0;
}
.grid .alt td.off {
    background: #dcdcdc;
}
.grid .letters th, .grid tbody th {
    background: #e0e0e0;
    border-color: #696969;
    box-shadow: inset 1px 1px #fff, inset -1px -1px #a0a0a0;
    font-size: 12px;
}
.grid .letters th {
    height: 14px;
    line-height: 13px;
}
.grid .letters th.corner {
    vertical-align: bottom;
    padding-bottom: 5px;
    font-size: 11px;
}
.grid .letters th.sel, .grid tbody th.sel {
    background: #0078d7;
    color: #fff;
    box-shadow: none;
}
.grid .names th {
    vertical-align: bottom;
    background: #f0f0f0;
    line-height: 16px;
}
.grid .names .group {
    border-bottom: 0;
}
.grid small {
    font-size: 9px;
}
.grid td.edit {
    border: 1px solid #000;
}
.editor {
    display: flex;
    height: 14px;
}
.editor input {
    flex: 1;
    min-width: 0;
    border: 0;
    padding: 0 3px;
    background: linear-gradient(#000, #000) 4px 12px / 5px 2px no-repeat #fff;
    outline: 0;
}
.pick {
    width: 12px;
    background: #e8e8e8;
    border-right: 1px solid #888;
}
.pick svg {
    display: block;
}
.sheet-tabs {
    display: flex;
    height: 19px;
    overflow: hidden;
    border-top: 1px solid #777;
    font: 11px "Liberation Sans", Arial, sans-serif;
}
.sheet-tabs button {
    flex: none;
    height: 17px;
    padding: 0 3px;
    background: #e3e3e3;
    border-right: 1px solid #555;
    border-bottom: 1px solid #555;
    border-radius: 0 0 4px 4px;
}
.sheet-tabs .active {
    position: relative;
    margin-top: -1px;
    background: #f0f0f0;
    border-bottom: 0;
    padding-bottom: 2px;
}
.status {
    height: 18px;
    padding-left: 2px;
    border-top: 1px solid #dcdcdc;
    font: 12px/18px Roboto, sans-serif;
}

/* callouts */
.callouts {
    position: absolute;
    left: 0;
    top: 0;
    pointer-events: none;
}

/* cross-section panel */
.panel {
    position: absolute;
    z-index: 2;
    right: 0;
    top: 64px;
    width: 360px;
    height: 514px;
    display: flex;
    flex-direction: column;
    padding: 2px 2px 2px 4px;
    background: #e9eef7;
    border-bottom: 2px solid #8a8f9a;
    border-right: 1px solid #a9adb8;
}
.panel-title {
    display: flex;
    align-items: center;
    justify-content: space-between;
    height: 24px;
    padding: 0 4px 0 2px;
    background: #b9c0cb;
}
.panel-title h2 {
    font: bold 11px "Noto Sans", sans-serif;
    color: #3f4550;
}
.close {
    display: flex;
}
.panel-body {
    display: flex;
    flex-direction: column;
    flex: 1;
    padding: 6px 6px 8px 5px;
    background: #f0f0f0;
    border: 1px solid #8a93a5;
    border-top: 0;
}
.panel-body h3 {
    font: 11px/16px "Liberation Sans", Arial, sans-serif;
}
.legend {
    flex: 1;
    list-style: none;
    padding: 2px 0 0 5px;
    background: #fff;
    border-top: 1px solid #888;
    border-left: 1px solid #888;
    font: 11px/18px "Noto Sans", sans-serif;
}
.legend li {
    display: flex;
    align-items: center;
    gap: 5px;
}
.sw {
    width: 16px;
    height: 15px;
    border: 1px solid #ddd;
}
.blue { background: #6699ff; }
.yellow { background: #f8c800; }
.rose { background: #bb7070; }
.red { background: #f00; }
.violet { background: #8888ff; }
.brown { background: #966629; }
.green { background: #336000; }
.panel-btn {
    width: 25px;
    height: 20px;
    margin-top: 6px;
    padding: 1px 3px;
    background: #e2e2e2;
    border: 1px solid #adadad;
}
.panel-btn svg {
    display: block;
}
.panel-tabs {
    height: 24px;
    padding-left: 4px;
    background: #cfd3dc;
}
.panel-tab {
    display: flex;
    flex-direction: column;
    align-items: center;
    justify-content: center;
    gap: 1px;
    width: 23px;
    height: 21px;
    background: #eef2f8;
    border: 1px solid #a6e2e6;
    border-top: 0;
    border-radius: 0 0 3px 3px;
}
.bar {
    width: 14px;
    height: 4px;
    border: 1px solid #555;
}
.bar.b { background: #00f; }
.bar.g { background: #0f0; }
.bar.r { background: #f00; }
```
